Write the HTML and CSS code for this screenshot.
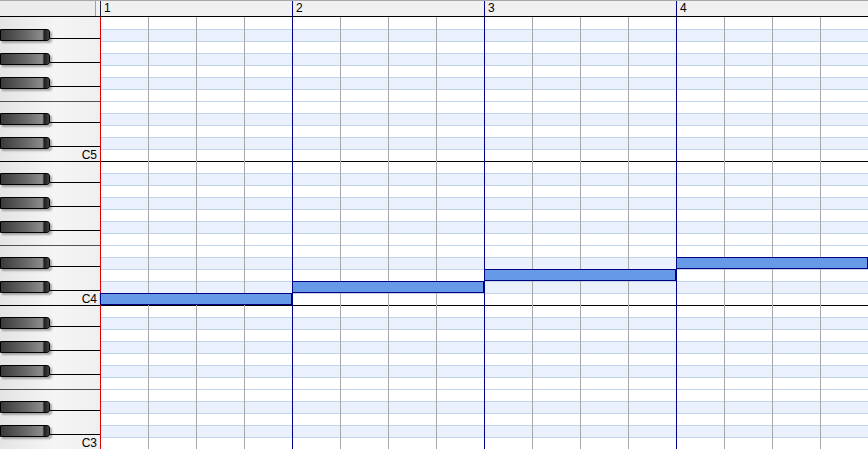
FILE: index.html
```html
<!DOCTYPE html>
<html lang="ja">
<head>
  <meta charset="UTF-8">
  <title>Piano Roll</title>
  <link rel="stylesheet" href="styles.css">
</head>
<body>
  <div class="roll">
    <div class="head">
      <div class="corner"></div>
      <div class="ruler">
        <span class="measure">1</span>
        <span class="measure">2</span>
        <span class="measure">3</span>
        <span class="measure">4</span>
      </div>
    </div>
    <div class="main">
      <!-- keyboard: B5 .. C3 -->
      <div class="keys">
        <div class="k"></div>
        <div class="k bk"><i class="key"></i><i class="kl"></i></div>
        <div class="k"></div>
        <div class="k bk"><i class="key"></i><i class="kl"></i></div>
        <div class="k"></div>
        <div class="k bk"><i class="key"></i><i class="kl"></i></div>
        <div class="k"></div>
        <div class="k ef"></div>
        <div class="k bk"><i class="key"></i><i class="kl"></i></div>
        <div class="k"></div>
        <div class="k bk"><i class="key"></i><i class="kl"></i></div>
        <div class="k c">C5</div>

        <div class="k oct"></div>
        <div class="k bk"><i class="key"></i><i class="kl"></i></div>
        <div class="k"></div>
        <div class="k bk"><i class="key"></i><i class="kl"></i></div>
        <div class="k"></div>
        <div class="k bk"><i class="key"></i><i class="kl"></i></div>
        <div class="k"></div>
        <div class="k ef"></div>
        <div class="k bk"><i class="key"></i><i class="kl"></i></div>
        <div class="k"></div>
        <div class="k bk"><i class="key"></i><i class="kl"></i></div>
        <div class="k c cur">C4</div>

        <div class="k oct"></div>
        <div class="k bk"><i class="key"></i><i class="kl"></i></div>
        <div class="k"></div>
        <div class="k bk"><i class="key"></i><i class="kl"></i></div>
        <div class="k"></div>
        <div class="k bk"><i class="key"></i><i class="kl"></i></div>
        <div class="k"></div>
        <div class="k ef"></div>
        <div class="k bk"><i class="key"></i><i class="kl"></i></div>
        <div class="k"></div>
        <div class="k bk"><i class="key"></i><i class="kl"></i></div>
        <div class="k c">C3</div>
      </div>

      <div class="grid">
        <div class="r first"></div>
        <div class="r b"></div>
        <div class="r"></div>
        <div class="r b"></div>
        <div class="r"></div>
        <div class="r b"></div>
        <div class="r"></div>
        <div class="r"></div>
        <div class="r b"></div>
        <div class="r"></div>
        <div class="r b"></div>
        <div class="r"></div>

        <div class="r oct"></div>
        <div class="r b"></div>
        <div class="r"></div>
        <div class="r b"></div>
        <div class="r"></div>
        <div class="r b"></div>
        <div class="r"></div>
        <div class="r"></div>
        <div class="r b"></div>
        <div class="r"></div>
        <div class="r b"></div>
        <div class="r"></div>

        <div class="r oct"></div>
        <div class="r b"></div>
        <div class="r"></div>
        <div class="r b"></div>
        <div class="r"></div>
        <div class="r b"></div>
        <div class="r"></div>
        <div class="r"></div>
        <div class="r b"></div>
        <div class="r"></div>
        <div class="r b"></div>
        <div class="r"></div>

        <!-- notes: C4, C#4, D4, D#4 -->
        <div class="note" style="left:0;top:276px"></div>
        <div class="note" style="left:192px;top:264px"></div>
        <div class="note" style="left:384px;top:252px"></div>
        <div class="note" style="left:576px;top:240px"></div>
      </div>
    </div>
  </div>
</body>
</html>
```

FILE: styles.css
```css
body {
  margin: 0;
  background: #fff;
  font-family: "Liberation Sans", Arial, sans-serif;
}
.roll {
  width: 868px;
  height: 449px;
  overflow: hidden;
}

/* header / ruler */
.head {
  display: flex;
  height: 17px;
  box-sizing: border-box;
  border-top: 1px solid #a8a8a8;
  border-bottom: 1px solid #000;
  background: #f0f0f0;
}
.corner {
  width: 96px;
  box-sizing: border-box;
  border-right: 1px solid #a0a0a0;
  background: #ececec;
  margin-right: 4px;
}
.ruler {
  display: flex;
  flex: 1;
}
.measure {
  width: 192px;
  flex: none;
  box-sizing: border-box;
  border-left: 1px solid #00008c;
  padding-left: 3px;
  font-size: 12px;
  line-height: 15px;
  color: #000;
}
.measure:first-child {
  border-left-color: #202040;
}

.main {
  display: flex;
}

/* keyboard */
.keys {
  width: 100px;
  flex: none;
  background: linear-gradient(to right, #e4e4e4, #f5f5f5 55%, #efefef);
}
.k {
  height: 12px;
  box-sizing: border-box;
  position: relative;
}
.k.oct {
  border-top: 1px solid #000;
}
.k.ef {
  border-top: 1px solid #505050;
}
.k.bk {
  display: flex;
  align-items: flex-start;
}
.key {
  width: 50px;
  height: 12px;
  flex: none;
  box-sizing: border-box;
  border: 1px solid #000;
  border-radius: 0 3px 3px 0;
  background: linear-gradient(to right, #3a3a3a, #666 50%, #8c8c8c 86%, #1e1e1e 90%, #444);
  box-shadow: 2px 2px 2px rgba(0, 0, 0, 0.3);
  z-index: 1;
}
.kl {
  flex: 1;
  height: 10px;
  box-sizing: border-box;
  border-bottom: 1px solid #000;
}
.k.c {
  text-align: right;
  padding-right: 3px;
  font-size: 12px;
  line-height: 12px;
  color: #000;
}
.k.cur {
  box-shadow: inset -1px 0 0 #f0e040;
}

/* note grid */
.grid {
  position: relative;
  width: 768px;
  flex: none;
}
.grid::before {
  content: "";
  position: absolute;
  inset: 0;
  z-index: 1;
  background:
    linear-gradient(#e00000, #e00000) 0 0 / 1px 100% no-repeat,
    repeating-linear-gradient(to right, #00008c 0 1px, transparent 1px 192px),
    repeating-linear-gradient(to right, #a8a8a8 0 1px, transparent 1px 48px);
}
.r {
  height: 12px;
  box-sizing: border-box;
  border-top: 1px solid #c2d3ec;
  background: #fff;
}
.r.b {
  background: #eaf1fd;
}
.r.first {
  border-top-color: #fff;
}
.r.oct {
  border-top-color: #000;
}
.note {
  position: absolute;
  z-index: 2;
  width: 192px;
  height: 12px;
  box-sizing: border-box;
  border: 1px solid #000080;
  background: #6699e6;
}
```
